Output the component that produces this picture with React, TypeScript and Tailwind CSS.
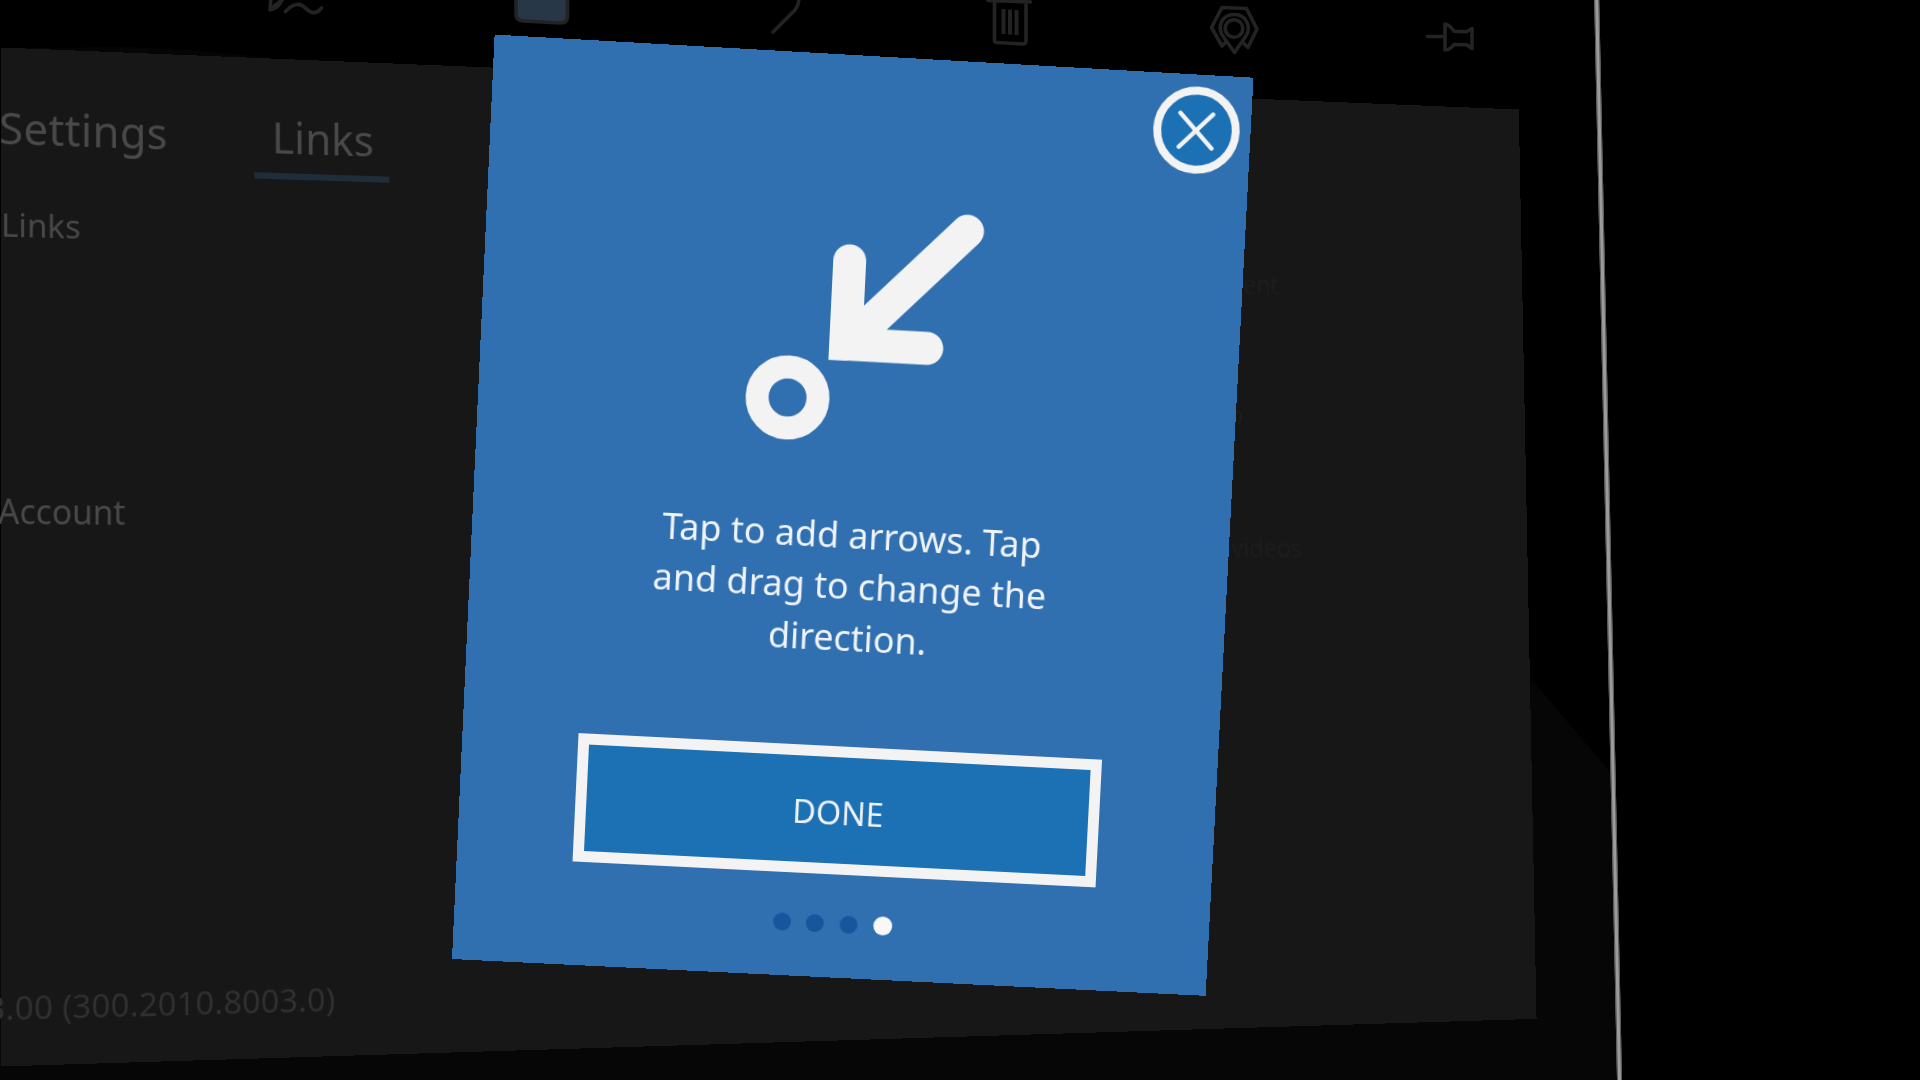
import React from "react";

type Point = [number, number];

// Perspective transform that carries a w x h box onto four screen corners
// (top-left, top-right, bottom-right, bottom-left).
function project(w: number, h: number, q: [Point, Point, Point, Point]): React.CSSProperties {
  const [[x0, y0], [x1, y1], [x2, y2], [x3, y3]] = q;
  const dx1 = x1 - x2, dx2 = x3 - x2, sx = x0 - x1 + x2 - x3;
  const dy1 = y1 - y2, dy2 = y3 - y2, sy = y0 - y1 + y2 - y3;
  const det = dx1 * dy2 - dx2 * dy1;
  const g = (sx * dy2 - dx2 * sy) / det;
  const k = (dx1 * sy - sx * dy1) / det;
  const m = [
    (x1 - x0 + g * x1) / w, (y1 - y0 + g * y1) / w, 0, g / w,
    (x3 - x0 + k * x3) / h, (y3 - y0 + k * y3) / h, 0, k / h,
    0, 0, 1, 0,
    x0, y0, 0, 1,
  ];
  return { transform: `matrix3d(${m.map((n) => n.toFixed(9)).join(",")})`, transformOrigin: "0 0" };
}

function ToolbarIcons() {
  return (
    <svg
      className="absolute left-0 top-0"
      width="1500"
      height="60"
      fill="none"
      stroke="#232323"
      strokeWidth="3.600"
      strokeLinejoin="round"
      strokeLinecap="round"
    >
      <path d="M271 -4 L270 10 Q280 8 283 -3 M273 7 L282 0" />
      <path d="M285.500 11.500 Q297 -1 306 8.500 Q314 17 321.500 8" />
      <path d="M516 -4 V14 Q516 20.500 523 21 L560 23 Q567.500 23 567.500 16 V-4 Z" fill="#283747" />
      <path d="M799 -3 Q799 6 794 11 L773 32" />
      <path d="M988 .5 L1030.500 2 M994.500 2 V40 Q994.500 42.500 997 42.500 L1023 44 Q1026 44 1026 41 V2" />
      <path d="M1003.500 9 V34 M1010 9.500 V34.500 M1016.500 10 V35" strokeWidth="4" strokeLinecap="butt" />
      <path d="M1226 42 L1222 46 L1211.500 27.500 L1222 7.500 L1246.500 8.500 L1257 29 L1248 47.500 L1243.500 43" />
      <path d="M1234.500 52.500 L1223.500 37 C1216 27 1222 14.500 1234.200 14.500 C1247 14.500 1252 28 1245 37.500 Z" />
      <circle cx="1234" cy="28.500" r="8.800" />
      <path d="M1427.500 36.500 H1444 M1445 24 V50 Q1450 50 1454 44.500 L1466.500 44.700 L1472 48.500 V28.500 L1466.500 31.700 L1454 31.300 Q1450 25 1445 24 Z" />
    </svg>
  );
}

function SettingsPanel() {
  return (
    <section
      className="absolute left-0 top-0 h-[960px] w-[1616px] bg-[#171717] text-[#494949]"
      style={project(1616, 960, [[1, 47.5], [1518.7, 109.5], [1536.5, 1018.8], [1, 1066.5]])}
    >
      <nav className="flex h-[116.500px] items-end text-[42px] leading-none">
        <div className="-ml-[2px] w-[247px] pb-[20px] tracking-[0.300px]">Settings</div>
        <div className="h-[62px] w-[134px] border-b-[6px] border-[#1e2d3a] pl-[2px] text-center">Links</div>
      </nav>
      <div className="flex">
        <div className="w-[1276px] text-[31.500px] leading-none">
          <h2 className="mt-[35.500px]">Links</h2>
          <h2 className="-ml-[3px] mt-[240px] text-[32px]">Account</h2>
          <p className="-ml-[14px] mt-[433.500px] tracking-[0.200px] text-[#303030]">3.00 (300.2010.8003.0)</p>
        </div>
        <div className="text-[26.500px] leading-none text-[#1d1d1d]">
          <p className="-ml-[40px] mt-[64px]">content</p>
          <p className="-ml-[42px] mt-[110px]">help</p>
          <p className="-ml-[3px] mt-[110px]">videos</p>
        </div>
      </div>
    </section>
  );
}

function ArrowDrawing() {
  return (
    <svg className="ml-[267px] mt-[152px] h-[236px] w-[232px] shrink-0" viewBox="269 154 232 236" fill="none" stroke="#f3f3f3">
      <circle cx="311" cy="346.500" r="30.500" strokeWidth="23" />
      <path d="M366.500 207 V290 H448 M483 171 L370 288" strokeWidth="33" strokeLinecap="round" />
      <path d="M351 289.500 V305.500 H368 V290 Z" fill="#f3f3f3" strokeWidth="2" />
    </svg>
  );
}

function TutorialDialog() {
  return (
    <section
      className="absolute left-0 top-0 flex h-[924px] w-[760px] flex-col bg-[#3070b1] text-[#f0f3f8]"
      style={project(760, 924, [[494.6, 34.6], [1253.4, 77.7], [1205.6, 995.8], [452, 959]])}
    >
      <button className="absolute left-[661.500px] top-[12px] flex size-[87px] items-center justify-center rounded-full border-[8px] border-[#f3f3f3] bg-[#1c70b4]">
        <svg width="40" height="40" viewBox="0 0 40 40" stroke="#f3f3f3" strokeWidth="4.400" strokeLinecap="round">
          <path d="M3.500 3 L36.500 37 M36.500 3 L3.500 37" />
        </svg>
      </button>
      <ArrowDrawing />
      <p className="mt-[65px] h-[154px] pl-px text-center text-[36px] leading-[51.300px]">
        Tap to add arrows. Tap
        <br />
        and drag to change the
        <br />
        direction.
      </p>
      <button className="ml-[116px] mt-[84px] flex h-[129px] w-[527px] shrink-0 items-center justify-center border-[11px] border-[#f3f3f3] bg-[#1c70b4] pl-px pt-[5px] text-[32.500px] leading-none">
        DONE
      </button>
      <div className="ml-[319.500px] mt-[40px] flex items-center gap-[15.700px]">
        <span className="size-[18px] rounded-full bg-[#18559c]" />
        <span className="size-[18px] rounded-full bg-[#18559c]" />
        <span className="size-[18px] rounded-full bg-[#18559c]" />
        <span className="size-[19px] rounded-full bg-[#f8f8f8]" />
      </div>
    </section>
  );
}

export default function App() {
  return (
    <main className="relative h-[1080px] w-[1920px] overflow-hidden bg-black font-['Noto_Sans',sans-serif]">
      <div className="absolute inset-0 bg-[#060606] [clip-path:polygon(0px_800px,1450px_590px,1531px_679px,1612px_774px,1619px_1080px,0px_1080px)]" />
      <div className="absolute inset-0 bg-[#050505] [clip-path:polygon(20px_48px,130px_47px,190px_50px,270px_58px,270px_70px,20px_70px)]" />
      <ToolbarIcons />
      <SettingsPanel />
      <div className="absolute left-[1594.400px] top-[-10px] h-[1100px] w-[5px] origin-top rotate-[-1.210deg] border-x border-[#555555] bg-[#9b9b9b]" />
      <TutorialDialog />
    </main>
  );
}
